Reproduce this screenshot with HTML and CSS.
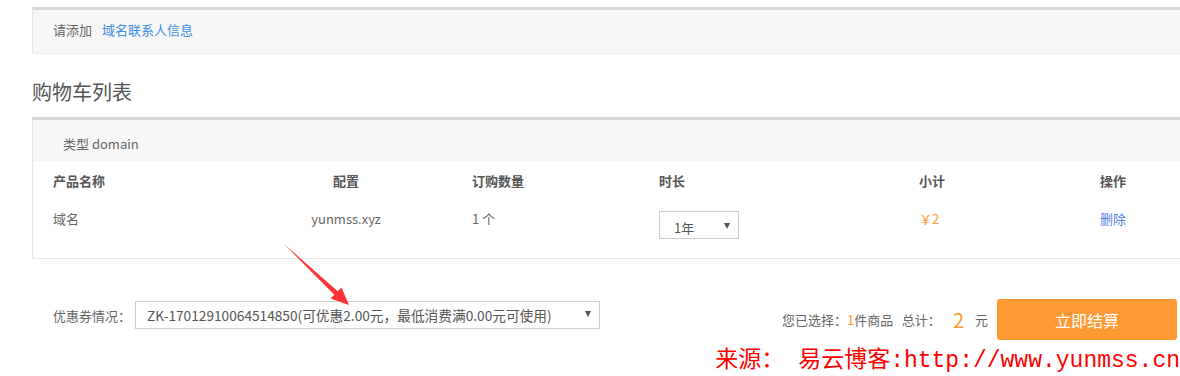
FILE: index.html
```html
<!DOCTYPE html>
<html lang="zh-CN">
<head>
  <meta charset="UTF-8">
  <title>购物车列表</title>
  <link rel="stylesheet" href="styles.css">
</head>
<body>

<div class="page">
  <div class="notice">
    请添加 <a href="#">域名联系人信息</a>
  </div>

  <h2>购物车列表</h2>

  <div class="cart">
    <div class="cart-type">类型 domain</div>
    <div class="cart-grid cart-head">
      <div>产品名称</div>
      <div class="col-center">配置</div>
      <div>订购数量</div>
      <div>时长</div>
      <div>小计</div>
      <div>操作</div>
    </div>
    <div class="cart-grid cart-row">
      <div>域名</div>
      <div class="col-center">yunmss.xyz</div>
      <div>1 个</div>
      <div>
        <div class="fake-select period">
          <span>1年</span>
          <i class="caret"></i>
        </div>
      </div>
      <div class="price">￥2</div>
      <div><a href="#" class="del">删除</a></div>
    </div>
  </div>

  <div class="footer">
    <div class="coupon">
      <label>优惠券情况：</label>
      <div class="fake-select coupon-select">
        <span>ZK-17012910064514850(可优惠2.00元，最低消费满0.00元可使用)</span>
        <i class="caret"></i>
      </div>
    </div>
    <div class="checkout">
      <span class="summary">您已选择：<em>1</em>件商品&nbsp;&nbsp;&nbsp;总计：</span>
      <span class="total">2</span>
      <span class="summary">元</span>
      <button class="btn-pay">立即结算</button>
    </div>
  </div>
</div>

<div class="watermark">来源： 易云博客:http://www.yunmss.cn</div>

<svg class="pointer" width="1180" height="376" viewBox="0 0 1180 376">
  <polygon points="284,244 337.7,291.2 341.5,287.5 349,305 330.5,298.5 334.3,294.8" fill="#f33"/>
</svg>

</body>
</html>
```

FILE: styles.css
```css
body {
  margin: 0;
  font-family: "Noto Sans CJK SC", sans-serif;
  font-size: 13px;
  color: #666;
  background: #fff;
  overflow: hidden;
  position: relative;
  height: 376px;
}
a {
  text-decoration: none;
}
.page {
  margin-left: 32px;
  width: 1160px;
}
.notice {
  margin-top: 7px;
  height: 43px;
  box-sizing: border-box;
  display: flex;
  align-items: center;
  padding: 0 0 4px 20px;
  background: #f7f7f7;
  border-top: 3px solid #d6d6d6;
  border-left: 1px solid #e3e3e3;
  border-bottom: 1px solid #ebebeb;
  color: #666;
  height: 47px;
}
.notice a {
  color: #3b8fe5;
  margin-left: 10px;
}
h2 {
  margin: 24px 0 11px;
  font-size: 20px;
  line-height: 28px;
  font-weight: normal;
  color: #555;
}
.cart {
  border-top: 3px solid #d6d6d6;
  border-left: 1px solid #e6e6e6;
  border-bottom: 1px solid #e8e8e8;
}
.cart-type {
  background: #f7f7f7;
  height: 41px;
  line-height: 47px;
  padding-left: 30px;
  box-sizing: border-box;
}
.cart-grid {
  display: grid;
  grid-template-columns: 200px 219px 187px 260px 181px 1fr;
}
.col-center {
  text-align: center;
  padding-right: 33px;
}
.cart-head {
  height: 40px;
  line-height: 40px;
  padding-left: 20px;
  font-weight: 600;
  color: #555;
}
.cart-row {
  padding: 8px 0 19px 20px;
  line-height: 20px;
  align-items: start;
}
.fake-select {
  position: relative;
  box-sizing: border-box;
  border: 1px solid #ccc;
  background: #fff;
  color: #555;
}
.caret {
  position: absolute;
  top: 11px;
  right: 8px;
  width: 0;
  height: 0;
  border-left: 3.5px solid transparent;
  border-right: 3.5px solid transparent;
  border-top: 6px solid #555;
}
.period {
  margin-top: 2px;
  width: 80px;
  height: 28px;
  line-height: 28px;
  padding: 2px 0 0 14px;
}
.price {
  color: #f93;
}
.del {
  color: #5181e0;
}
.footer {
  width: 1124px;
  margin-top: 40px;
  padding-left: 21px;
  display: flex;
  justify-content: space-between;
  align-items: flex-start;
}
.coupon {
  display: flex;
  align-items: center;
  margin-top: 2px;
}
.coupon label {
  margin-right: 4px;
}
.coupon-select {
  width: 465px;
  height: 28px;
  line-height: 26px;
  padding-left: 11px;
  font-size: 13.7px;
}
.coupon-select .caret {
  top: 9px;
}
.checkout {
  display: flex;
  align-items: center;
}
.summary em {
  font-style: normal;
  color: #f93;
}
.total {
  color: #f93;
  font-size: 20px;
  margin: 0 11px 0 12px;
}
.btn-pay {
  margin-left: 9px;
  width: 180px;
  height: 41px;
  border: none;
  border-radius: 3px;
  background: #ff9933;
  color: #fff;
  font-family: "Noto Sans CJK SC", sans-serif;
  font-size: 16px;
  cursor: pointer;
}
.watermark {
  margin-top: 6px;
  text-align: right;
  font-family: "Liberation Mono", "Noto Sans CJK SC", monospace;
  font-size: 23px;
  line-height: 30px;
  color: #f00;
  white-space: nowrap;
}
.pointer {
  position: absolute;
  top: 0;
  left: 0;
  pointer-events: none;
}
```
